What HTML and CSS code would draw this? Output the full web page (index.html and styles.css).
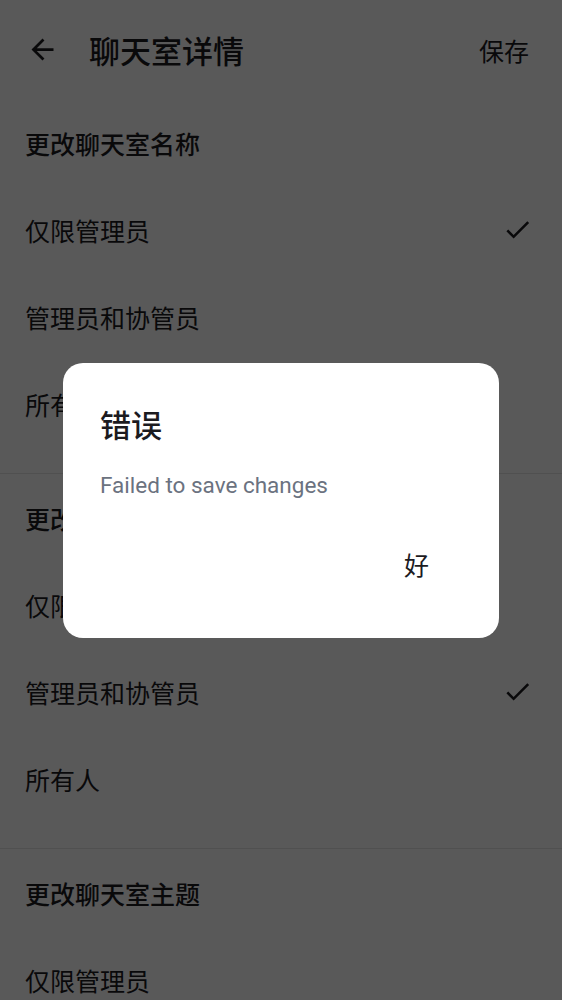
FILE: index.html
```html
<!DOCTYPE html>
<html lang="zh-CN">
<head>
<meta charset="utf-8">
<title>聊天室详情</title>
<link rel="stylesheet" href="styles.css">
</head>
<body>
<div class="page">
  <header class="appbar">
    <span class="back">
      <svg viewBox="0 0 24 24" width="33" height="33"><path d="M20 11H7.83l5.59-5.59L12 4l-8 8 8 8 1.41-1.41L7.83 13H20v-2z" fill="#1c1b1f"/></svg>
    </span>
    <h1 class="title">聊天室详情</h1>
    <span class="save">保存</span>
  </header>

  <section class="section">
    <div class="row head">更改聊天室名称</div>
    <div class="row"><span>仅限管理员</span><svg class="check" viewBox="0 0 24 24" width="31" height="31"><path d="M9 16.17L4.83 12l-1.42 1.41L9 19 21 7l-1.41-1.41z" fill="#1c1b1f"/></svg></div>
    <div class="row"><span>管理员和协管员</span></div>
    <div class="row"><span>所有人</span></div>
  </section>

  <section class="section">
    <div class="row head">更改聊天室头像</div>
    <div class="row"><span>仅限管理员</span></div>
    <div class="row"><span>管理员和协管员</span><svg class="check" viewBox="0 0 24 24" width="31" height="31"><path d="M9 16.17L4.83 12l-1.42 1.41L9 19 21 7l-1.41-1.41z" fill="#1c1b1f"/></svg></div>
    <div class="row"><span>所有人</span></div>
  </section>

  <section class="section">
    <div class="row head">更改聊天室主题</div>
    <div class="row"><span>仅限管理员</span></div>
    <div class="row"><span>管理员和协管员</span></div>
    <div class="row"><span>所有人</span></div>
  </section>
</div>

<div class="overlay">
  <div class="dialog" role="alertdialog">
    <h2 class="dlg-title">错误</h2>
    <p class="dlg-msg">Failed to save changes</p>
    <div class="dlg-actions"><span class="dlg-btn">好</span></div>
  </div>
</div>
</body>
</html>
```

FILE: styles.css
```css
html, body {
  margin: 0;
  padding: 0;
  height: 100%;
  overflow: hidden;
  background: #ffffff;
}
body {
  font-family: "Noto Sans CJK SC", "Noto Sans", sans-serif;
  color: #1c1b1f;
}
.page {
  width: 562px;
}
.appbar {
  height: 99px;
  display: flex;
  align-items: center;
  padding: 0 33px 0 26px;
  box-sizing: border-box;
}
.back {
  display: flex;
  width: 33px;
  height: 33px;
}
.title {
  margin: 0 0 0 30px;
  font-size: 31px;
  font-weight: 500;
  line-height: 40px;
  flex: 1;
}
.save {
  font-size: 25px;
  line-height: 32px;
}
.section {
  border-bottom: 1px solid #e6e6e6;
  padding-bottom: 26px;
}
.row {
  height: 87px;
  display: flex;
  align-items: center;
  justify-content: space-between;
  padding: 0 29px 0 25px;
  font-size: 25px;
  line-height: 34px;
}
.row.head {
  font-weight: 500;
}
.check {
  display: block;
}
.overlay {
  position: fixed;
  inset: 0;
  background: rgba(0, 0, 0, 0.65);
  display: flex;
  align-items: center;
  justify-content: center;
}
.dialog {
  width: 436px;
  background: #ffffff;
  border-radius: 20px;
  padding: 41px 0 54px;
  box-sizing: border-box;
}
.dlg-title {
  margin: 0 0 0 37px;
  font-size: 31px;
  font-weight: 500;
  line-height: 40px;
}
.dlg-msg {
  margin: 26px 0 0 37px;
  font-family: Roboto, "Noto Sans", sans-serif;
  font-size: 22.5px;
  line-height: 30px;
  color: #6b7280;
}
.dlg-actions {
  margin-top: 44px;
  display: flex;
  justify-content: flex-end;
  padding-right: 70px;
}
.dlg-btn {
  font-size: 25px;
  line-height: 40px;
}
```
